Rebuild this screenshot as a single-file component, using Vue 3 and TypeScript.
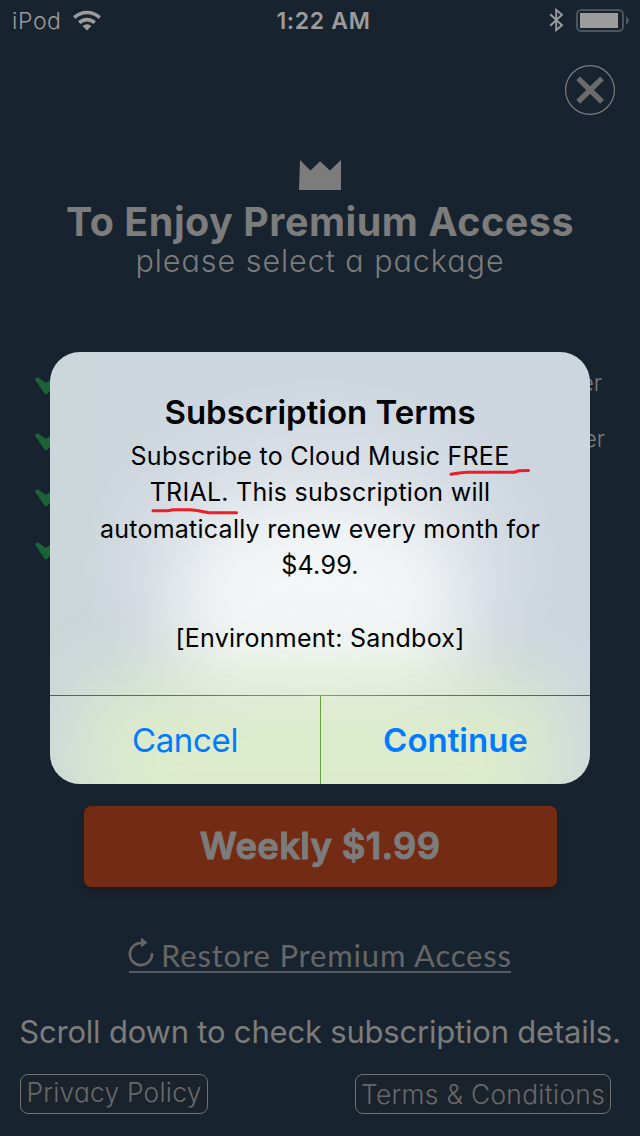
<script setup lang="ts">
interface Feature {
  tail: string
  kind: string
}

const features: Feature[] = [
  { tail: 'er', kind: 'first' },
  { tail: 'er', kind: 'second' },
  { tail: '', kind: 'third' },
  { tail: '', kind: 'fourth' },
]
</script>

<template>
  <main class="screen">
    <header class="status">
      <div class="carrier">
        <span class="ipod">iPod</span>
        <svg class="wifi" width="28" height="21" viewBox="0 0 28 21">
          <path d="M1.3 7.6A18.2 18.2 0 0 1 26.7 7.6" />
          <path d="M6.3 12.7A11.2 11.2 0 0 1 21.7 12.7" />
          <path class="solid" d="M14 20.6L9.6 16.1A6.4 6.4 0 0 1 18.4 16.1Z" />
        </svg>
      </div>
      <span class="time">1:22 AM</span>
      <div class="indicators">
        <svg class="bluetooth" width="16" height="24" viewBox="0 0 16 24">
          <path d="M1.2 6.2L13 17.2L7.2 22.2V1.8L13 6.8L1.2 17.8" />
        </svg>
        <svg class="battery" width="54" height="24" viewBox="0 0 54 24">
          <rect class="shell" x="1" y="1" width="46" height="21" rx="4.5" />
          <rect class="charge" x="4" y="4" width="38" height="15" />
          <path class="tip" d="M50 7.3Q53 9 53 11.5Q53 14 50 15.8Z" />
        </svg>
      </div>
    </header>

    <div class="close-row">
      <button class="close" aria-label="Close">
        <svg width="50" height="50" viewBox="0 0 50 50">
          <circle cx="25" cy="25" r="24.4" />
          <path d="M13.2 13.4L37 36.8M37 13.4L13.2 36.8" />
        </svg>
      </button>
    </div>

    <section class="intro">
      <svg class="crown" width="42" height="30" viewBox="0 0 42 30">
        <path d="M1 0L11.5 10.5L21 1.2L31 10.5L42 0V30H0Z" />
      </svg>
      <h1><span>To Enjoy Premium Access</span></h1>
      <p><span>please select a package</span></p>
    </section>

    <ul class="features">
      <li v-for="feature in features" :key="feature.kind" :class="feature.kind">
        <svg width="26" height="18" viewBox="0 0 26 18">
          <path d="M0 2.4Q1.4 -.2 3.2 .6L10.6 5.8L21 0L25 3L12 17Q10.5 18 9.4 16.6Z" />
        </svg>
        <span>{{ feature.tail }}</span>
      </li>
    </ul>

    <button class="weekly"><span>Weekly $1.99</span></button>

    <a class="restore">
      <svg width="26" height="31" viewBox="0 0 26 31">
        <path class="arc" d="M12.7 6A11.1 11.1 0 1 0 23 16.2" />
        <path class="arrow" d="M12 .5L18.5 5.4L12 10.5Z" />
      </svg>
      <span>Restore Premium Access</span>
    </a>

    <p class="details"><span>Scroll down to check subscription details.</span></p>

    <footer class="legal">
      <button class="privacy"><span>Privacy Policy</span></button>
      <button class="terms"><span>Terms &amp; Conditions</span></button>
    </footer>

    <section class="dialog" role="alertdialog">
      <div class="copy">
        <h2>Subscription Terms</h2>
        <div class="message">
          <span class="line one">Subscribe to Cloud Music <em>FREE<svg width="82" height="8" viewBox="0 0 82 8"><path d="M2 5.3L10 4L18 3.2H65L70 1.7L79.5 1.5" /></svg></em></span>
          <span class="line two"><em>TRIAL.<svg width="88" height="8" viewBox="0 0 88 8"><path d="M2 2.8H17L22 1.8H39L46 2.6L58 4.8H85.5" /></svg></em> This subscription will</span>
          <span class="line three">automatically renew every month for</span>
          <span class="line four">$4.99.</span>
          <span class="line">&nbsp;</span>
          <span class="line five">[Environment: Sandbox]</span>
        </div>
      </div>
      <div class="actions">
        <button class="cancel"><span>Cancel</span></button>
        <button class="continue"><span>Continue</span></button>
      </div>
    </section>
  </main>
</template>

<style>
html,
body {
  background: #17232e;
}
</style>

<style scoped>
* {
  box-sizing: border-box;
}

.screen {
  position: relative;
  display: flex;
  flex-direction: column;
  width: 640px;
  height: 1136px;
  overflow: hidden;
  background: #17232e;
  color: #7c7c7c;
  font-family: Inter, "Liberation Sans", sans-serif;
}

h1, h2, p, ul {
  margin: 0;
  padding: 0;
  list-style: none;
}

button {
  padding: 0;
  border: 0;
  background: none;
  color: inherit;
  font-family: inherit;
}

svg {
  display: block;
  flex: none;
  overflow: visible;
}

span {
  white-space: nowrap;
}

.status {
  display: grid;
  grid-template-columns: 1fr auto 1fr;
  height: 40px;
  padding: 2px 10px 0 12px;
  align-items: center;
  color: #9c9c9c;
}

.carrier,
.indicators {
  display: flex;
  align-items: center;
}

.ipod {
  width: 61px;
  font-size: 23px;
  font-weight: 300;
  letter-spacing: 0.6px;
}

.wifi {
  margin-top: -2px;
}

.wifi path {
  fill: none;
  stroke: #9c9c9c;
  stroke-width: 3.6;
}

.wifi .solid {
  fill: #9c9c9c;
  stroke: none;
}

.time {
  padding-left: 5px;
  font-size: 23px;
  font-weight: 600;
  letter-spacing: 0.65px;
}

.indicators {
  justify-content: flex-end;
  gap: 11px;
}

.bluetooth {
  margin-top: -2px;
}

.bluetooth path {
  fill: none;
  stroke: #9c9c9c;
  stroke-width: 1.9;
}

.shell {
  fill: none;
  stroke: #4c555d;
  stroke-width: 2;
}

.charge {
  fill: #9c9c9c;
}

.tip {
  fill: #4c555d;
}

.close-row {
  display: flex;
  justify-content: flex-end;
  padding: 25px 25px 0 0;
}

.close circle {
  fill: none;
  stroke: #7c7c7c;
  stroke-width: 1.2;
}

.close path {
  stroke: #6b6b6b;
  stroke-width: 5.4;
}

.intro {
  display: flex;
  flex-direction: column;
  align-items: center;
  padding-top: 45px;
}

.crown {
  fill: #7c7c7c;
}

h1 {
  height: 58px;
  font-size: 39.5px;
  line-height: 64px;
  font-weight: 700;
  letter-spacing: 0.5px;
  font-feature-settings: "cv11";
}

.intro p {
  height: 28px;
  font-size: 30.5px;
  line-height: 26px;
  font-weight: 300;
  letter-spacing: 0.96px;
  font-feature-settings: "cv11";
}

.features {
  display: grid;
  grid-template-rows: repeat(4, 56px);
  height: 224px;
  margin-top: 80px;
  padding: 0 38px 0 35px;
}

.features li {
  display: flex;
  align-items: center;
  justify-content: space-between;
  font-size: 23px;
  line-height: 28px;
  font-weight: 300;
}

.features li svg {
  margin-top: 4px;
}

.features li span {
  margin-top: -2px;
}

.features .fourth svg {
  margin-top: -2px;
}

.features path {
  fill: #1b6237;
}

.features .second {
  margin-right: -3px;
}

.weekly {
  align-self: center;
  width: 473px;
  height: 81px;
  margin-top: 226px;
  border-radius: 7px;
  background: #732b13;
  box-shadow: 0 6px 6px -2px #1c1b20;
  color: #7c7c7c;
  font-size: 36.5px;
  line-height: 81px;
  font-weight: 600;
  letter-spacing: 0.3px;
  -webkit-text-stroke: 1px #7c7c7c;
  stroke-linejoin: round;
}

.restore {
  display: flex;
  align-self: center;
  width: 382px;
  height: 36px;
  margin-top: 50px;
  border-bottom: 2px solid #555b60;
  color: #666;
  font-family: Lato, sans-serif;
  font-size: 31px;
  line-height: 36px;
  letter-spacing: 0.83px;
}

.restore svg {
  width: 26px;
  margin-right: 6px;
}

.arc {
  fill: none;
  stroke: #666;
  stroke-width: 2.6;
}

.arrow {
  fill: #666;
}

.details {
  margin-top: 37px;
  height: 45px;
  text-align: center;
  font-size: 31px;
  line-height: 43px;
  letter-spacing: -0.2px;
}

.legal {
  display: flex;
  justify-content: space-between;
  padding: 19px 29px 0 20px;
}

.legal button {
  height: 40px;
  border: 1.5px solid #707274;
  border-radius: 8px;
  background: #1a222c;
  color: #696969;
  font-size: 26.3px;
  font-weight: 300;
  line-height: 32px;
  font-feature-settings: "cv11";
}

.legal .privacy {
  width: 188px;
  padding-bottom: 2px;
  letter-spacing: 0.25px;
}

.legal .terms {
  width: 256px;
  padding-top: 2px;
  letter-spacing: 0.33px;
}

.dialog {
  position: absolute;
  top: 352px;
  left: 50px;
  width: 540px;
  height: 432px;
  overflow: hidden;
  border-radius: 30px;
  background:
    radial-gradient(ellipse 240px 190px at 270px 215px, rgba(240, 243, 245, 1) 0, rgba(228, 232, 236, 0.6) 50%, rgba(215, 222, 229, 0) 100%),
    linear-gradient(90deg, #cbd7da 0, rgba(205, 214, 223, 0) 25%),
    #cdd6df;
  color: #000;
}

/* Frosted patches behind the alert text */
.dialog::before,
.dialog::after {
  content: "";
  position: absolute;
}

.dialog::before {
  top: 170px;
  left: 135px;
  width: 270px;
  height: 205px;
  border-radius: 60px;
  background: #f3f6f8;
  filter: blur(36px);
}

.dialog::after {
  top: 322px;
  left: 25px;
  width: 490px;
  height: 170px;
  border-radius: 60px;
  background: #dcebcb;
  filter: blur(38px);
}

.copy,
.actions {
  position: relative;
  z-index: 1;
}

.copy {
  height: 343px;
  padding-top: 39px;
  text-align: center;
}

h2 {
  height: 47px;
  font-size: 33px;
  line-height: 43px;
  font-weight: 600;
}

.message {
  display: flex;
  flex-direction: column;
  align-items: center;
  font-size: 25px;
  line-height: 36.4px;
  letter-spacing: 0.25px;
}

.line {
  display: block;
  height: 36.4px;
}

em {
  position: relative;
  font-style: normal;
}

em svg {
  position: absolute;
  top: 28px;
  left: 1px;
  fill: none;
  stroke: #ee1c24;
  stroke-width: 3;
  stroke-linecap: round;
  stroke-linejoin: round;
}

.two em svg {
  top: 31px;
  left: 1px;
}

.actions {
  display: grid;
  grid-template-columns: 270px 270px;
  height: 89px;
  border-top: 1px solid;
  border-image: linear-gradient(90deg, #426467, #4d8c3c 28%, #76a858 50%, #4d8440 72%, #42606a) 1;
}

.actions button {
  color: #007aff;
  font-size: 33px;
  line-height: 88px;
}

.actions .cancel {
  letter-spacing: -0.35px;
}

.actions .continue {
  border-left: 1px solid #63a438;
  font-weight: 600;
}
</style>
